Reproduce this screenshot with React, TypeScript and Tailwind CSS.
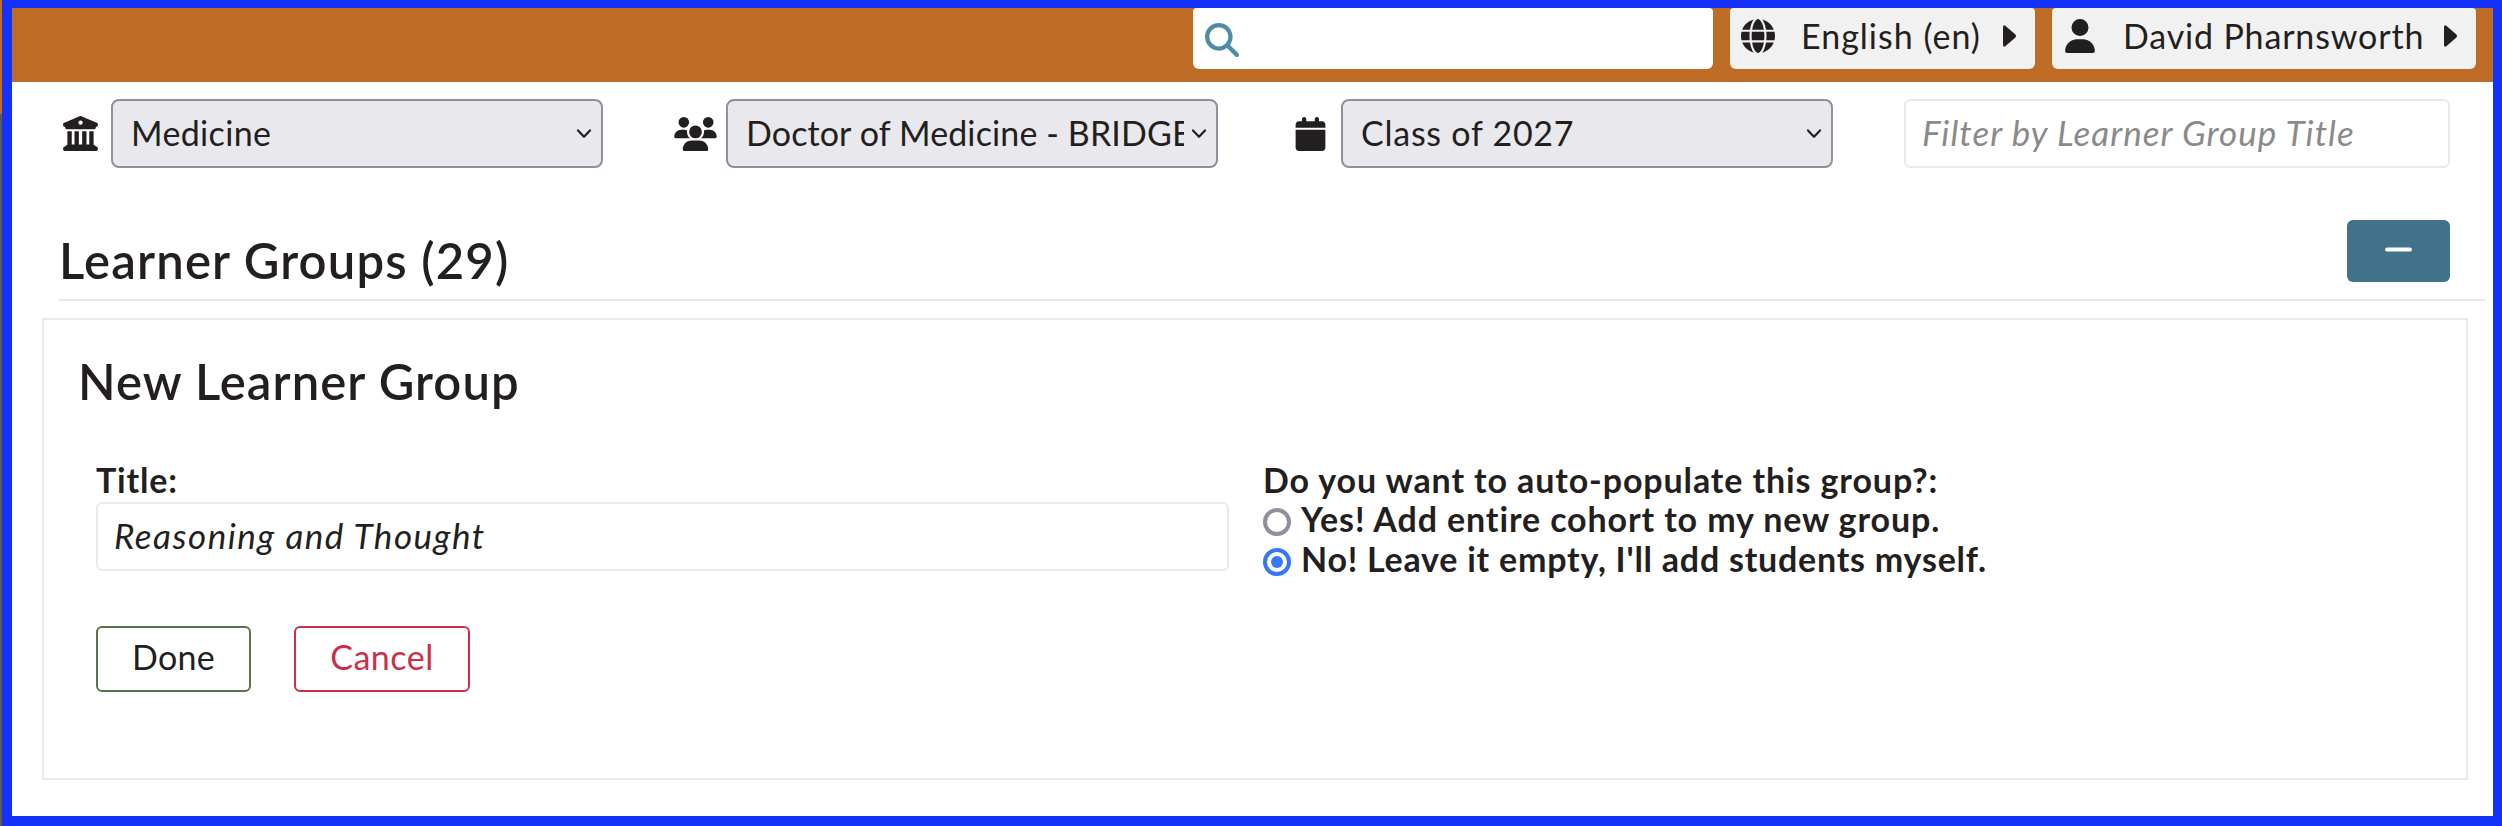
import type { ReactNode } from "react";
import {
  FaBuildingColumns,
  FaCalendar,
  FaGlobe,
  FaMagnifyingGlass,
  FaMinus,
  FaUser,
  FaUsers,
} from "react-icons/fa6";

function Picker({ icon, label, spacing }: { icon: ReactNode; label: string; spacing: string }) {
  return (
    <div className="flex items-center justify-end">
      <span className="flex shrink-0">{icon}</span>
      <div className="flex h-[69px] w-[492px] shrink-0 items-center rounded-lg border-2 border-[#8f8f9d] bg-[#e9e9ed] pr-[9px] pl-[18px]">
        <span className={"w-[438px] overflow-hidden pb-px leading-[42px] whitespace-nowrap " + spacing}>{label}</span>
        <svg className="ml-auto shrink-0" width="16" height="12" viewBox="0 0 16 12" fill="none">
          <path d="M2 2.4 8 8.8 14 2.4" stroke="#231f20" strokeWidth="2.2" strokeLinecap="round" strokeLinejoin="round" />
        </svg>
      </div>
    </div>
  );
}

function Radio({ checked, label, spacing }: { checked?: boolean; label: string; spacing: string }) {
  return (
    <label className="flex h-10 items-center">
      <span
        className={
          checked
            ? "flex size-7 items-center justify-center rounded-full border-4 border-[#3478f6]"
            : "size-7 rounded-full border-4 border-[#8f8f9d]"
        }
      >
        {checked && <span className="size-3 rounded-full bg-[#3478f6]" />}
      </span>
      <span className={"ml-[10px] pb-[6px] " + spacing}>{label}</span>
    </label>
  );
}

function Caret() {
  return (
    <svg className="mt-[17px]" width="13" height="22" viewBox="0 0 13 22">
      <path d="M0 2Q0 0 2 .4L12.4 9.6Q13.6 11 12.4 12.4L2 21.6Q0 22 0 20Z" fill="#231f20" />
    </svg>
  );
}

function Header() {
  return (
    <header className="flex h-[74px] justify-end gap-[17px] bg-[#be6b26] pr-[17px]">
      <div className="flex h-[61px] w-[520px] items-center rounded-t-sm rounded-b-md bg-white pt-[3px] pl-3">
        <FaMagnifyingGlass size={34} color="#4e8ba9" />
      </div>
      <button className="flex h-[61px] w-[305px] items-start rounded-t-sm rounded-b-md bg-[#f1f1f1] pl-[11px]">
        <FaGlobe className="mt-[11px]" size={34} />
        <span className="mt-[7px] ml-[26px] w-[202px] text-left leading-[42px] tracking-[1px]">English (en)</span>
        <Caret />
      </button>
      <button className="flex h-[61px] w-[424px] items-start rounded-t-sm rounded-b-md bg-[#f1f1f1] pl-[13px]">
        <FaUser className="mt-[11px] w-[30px]" size={34} />
        <span className="mt-[7px] ml-[28px] w-[321px] text-left leading-[42px] tracking-[0.84px]">David Pharnsworth</span>
        <Caret />
      </button>
    </header>
  );
}

export default function App() {
  return (
    <div className="flex h-[826px] w-[2502px] bg-[#5a5a5a] font-['Lato',sans-serif] text-[34px] leading-[42px] text-[#231f20]">
      <div className="h-[114px] w-[2px] shrink-0 bg-[#be6b26]" />
      <div className="w-[2500px] border-t-8 border-r-9 border-b-10 border-l-10 border-[#1331f8] bg-white">
        <Header />

        <section className="mt-[17px] flex">
          <div className="w-[591px]">
            <Picker icon={<FaBuildingColumns className="mr-[13px]" size={35} />} label="Medicine" spacing="tracking-[0.35px]" />
          </div>
          <div className="w-[615px]">
            <Picker
              icon={<FaUsers className="mr-[9px] w-[43px]" size={34} />}
              label="Doctor of Medicine - BRIDGE"
              spacing="tracking-[0.12px]"
            />
          </div>
          <div className="w-[615px]">
            <Picker
              icon={<FaCalendar className="mr-[15px] w-[31px]" size={34} />}
              label="Class of 2027"
              spacing="tracking-[0.75px]"
            />
          </div>
          <div className="ml-[71px] flex h-[69px] w-[546px] items-center rounded-md border-2 border-[#e5ebea] pl-4 text-[35px] text-[#8a8a8a] italic">
            <span className="pb-[3px] tracking-[1.03px]">Filter by Learner Group Title</span>
          </div>
        </section>

        <section className="mt-[50px] ml-[47px] flex h-[83px] w-[2426px] justify-between border-b-2 border-[#e5ebea] pt-[2px]">
          <h1 className="mt-[10px] text-[49px] leading-[60px] font-semibold tracking-[1.18px]">Learner Groups (29)</h1>
          <button className="mr-[35px] flex h-[62px] w-[103px] items-center justify-center rounded-md bg-[#40728a] pb-[3px]">
            <FaMinus size={33} color="#ffffff" />
          </button>
        </section>

        <section className="mt-[17px] ml-[30px] h-[462px] w-[2426px] border-2 border-[#e5ebea] pl-[33px]">
          <h2 className="mt-[31px] ml-px text-[49px] leading-[60px] font-semibold tracking-[1.06px]">New Learner Group</h2>
          <div className="mt-[48px] ml-[19px] flex">
            <div className="w-[1133px]">
              <div className="h-[43px] font-bold tracking-[0.8px]">Title:</div>
              <div className="flex h-[69px] items-center rounded-md border-2 border-[#e5ebea] pl-4 text-[35px] italic">
                <span className="pb-1 tracking-[1.5px]">Reasoning and Thought</span>
              </div>
            </div>
            <div className="ml-[34px] font-bold">
              <div className="h-[43px] tracking-[0.89px]">Do you want to auto-populate this group?:</div>
              <Radio label="Yes! Add entire cohort to my new group." spacing="tracking-[0.88px]" />
              <Radio checked label="No! Leave it empty, I'll add students myself." spacing="tracking-[0.76px]" />
            </div>
          </div>
          <div className="mt-[44px] ml-[19px] flex gap-[43px]">
            <button className="h-[66px] w-[155px] rounded-md border-2 border-[#5b7348] pb-1 tracking-[0.3px]">Done</button>
            <button className="h-[66px] w-[176px] rounded-md border-2 border-[#cb3048] pb-1 tracking-[0.5px] text-[#cb3048]">Cancel</button>
          </div>
        </section>
      </div>
    </div>
  );
}
